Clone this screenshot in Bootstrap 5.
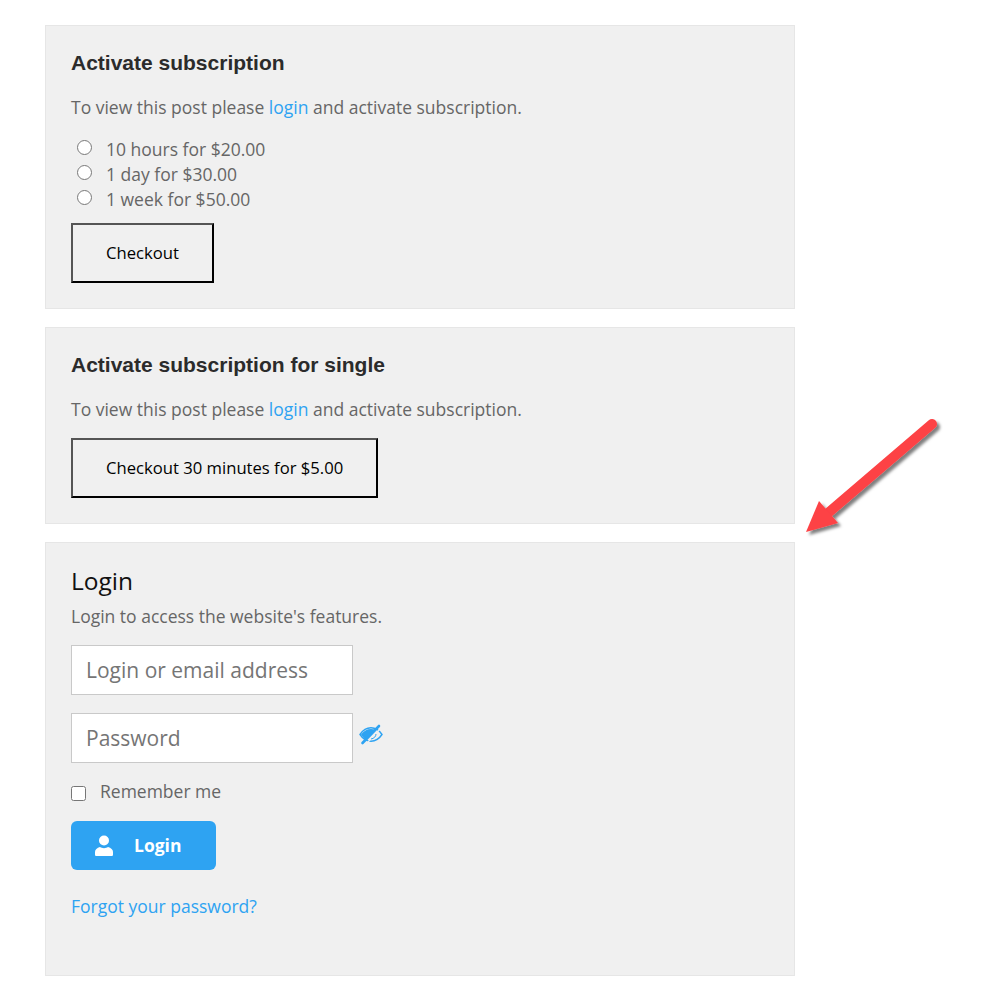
<!DOCTYPE html>
<html lang="en">
<head>
  <meta charset="UTF-8">
  <meta name="viewport" content="width=device-width, initial-scale=1.0">
  <title>Activate subscription</title>
  <link href="https://cdn.jsdelivr.net/npm/bootstrap@5.3.0/dist/css/bootstrap.min.css" rel="stylesheet">
  <style>
    body {
      background-color: #fff;
      font-family: "Open Sans", sans-serif;
      font-size: 17.5px;
      line-height: 25px;
      color: #666;
    }
    .page-wrap {
      width: 750px;
      margin: 25px 0 0 45px;
    }
    .sub-box {
      background-color: #f0f0f0;
      border: 1px solid #e6e6e6;
      padding: 25px;
      margin-bottom: 18px;
    }
    .sub-title {
      font-family: "Liberation Sans", sans-serif;
      font-weight: 700;
      font-size: 21px;
      line-height: 24px;
      color: #2b2b2b;
      margin: 0 0 20px;
    }
    .sub-text {
      margin: 0 0 16px;
    }
    .sub-text a, .forgot-link {
      color: #2ea3f2;
      text-decoration: none;
    }
    .plan-list {
      padding: 1px 0 0 6px;
      margin-bottom: 11px;
    }
    .plan-item {
      display: flex;
      height: 25px;
    }
    .plan-item input {
      width: 15px;
      height: 15px;
      margin: 3px 14px 0 0;
      accent-color: #666;
      flex: none;
    }
    .checkout-btn {
      display: inline-block;
      background-color: transparent;
      height: 60px;
      padding: 0 33px 2px;
      font-size: 16.65px;
      color: #000;
      border: 2px solid;
      border-color: #555 #000 #000 #555;
      border-radius: 0;
    }
    .login-title {
      font-size: 24.5px;
      line-height: 26px;
      color: #111;
      margin: 0 0 10px;
    }
    .login-sub {
      margin: 0 0 16px;
    }
    .login-input {
      width: 282px;
      height: 50px;
      border: 1px solid #c9c9c9;
      border-radius: 0;
      padding: 0 14px 1px;
      font-size: 21px;
      color: #666;
    }
    .login-input::placeholder {
      color: #757575;
      opacity: 1;
    }
    .pass-row {
      margin: 18px 0 16px;
    }
    .eye-icon {
      margin: 10px 0 0 6px;
    }
    .remember-row {
      margin-bottom: 17px;
    }
    .remember-row input {
      width: 15px;
      height: 15px;
      margin: 7px 14px 0 0;
      accent-color: #666;
    }
    .login-btn {
      width: 145px;
      height: 49px;
      background-color: #2ea3f2;
      color: #fff;
      font-weight: 700;
      font-size: 17.5px;
      border: 0;
      border-radius: 6px;
      padding: 0 0 0 24px;
      gap: 21px;
    }
    .forgot-wrap {
      margin: 24px 0 31px;
    }
    .arrow-mark {
      position: absolute;
      left: 800px;
      top: 412px;
    }
  </style>
</head>
<body>
  <div class="page-wrap">
    <div class="sub-box">
      <h3 class="sub-title">Activate subscription</h3>
      <p class="sub-text">To view this post please <a href="#">login</a> and activate subscription.</p>
      <div class="plan-list">
        <label class="plan-item"><input type="radio" name="plan"><span>10 hours for $20.00</span></label>
        <label class="plan-item"><input type="radio" name="plan"><span>1 day for $30.00</span></label>
        <label class="plan-item"><input type="radio" name="plan"><span>1 week for $50.00</span></label>
      </div>
      <button type="button" class="checkout-btn">Checkout</button>
    </div>

    <div class="sub-box">
      <h3 class="sub-title">Activate subscription for single</h3>
      <p class="sub-text">To view this post please <a href="#">login</a> and activate subscription.</p>
      <button type="button" class="checkout-btn">Checkout 30 minutes for $5.00</button>
    </div>

    <div class="sub-box mb-0">
      <h2 class="login-title">Login</h2>
      <p class="login-sub">Login to access the website's features.</p>
      <form>
        <input type="text" class="login-input d-block" placeholder="Login or email address">
        <div class="pass-row d-flex align-items-start">
          <input type="password" class="login-input" placeholder="Password">
          <svg class="eye-icon" width="24" height="22" viewBox="0 0 24 22" fill="none">
            <path d="M1 11.5C4 7 8 4.8 12 4.8s8 2.2 11 6.700c-3 4.500-7 6.700-11 6.700S4 16 1 11.500Z" stroke="#2ea3f2" stroke-width="1.400"/>
            <path d="M2 11.500C4.500 8 8 6 12 6c1.500 0 3 .3 4.200.8L7 17C5 15.800 3.500 13.600 2 11.500Z" fill="#2ea3f2"/>
            <path d="M21.500 5.500 8 20" stroke="#f0f0f0" stroke-width="1.200"/>
            <path d="M20 3 3.500 20" stroke="#2ea3f2" stroke-width="2.600" stroke-linecap="round"/>
            <path d="M17 11c0 2.500-2 4.500-5 5" stroke="#2ea3f2" stroke-width="1"/>
          </svg>
        </div>
        <label class="remember-row d-flex align-items-start">
          <input type="checkbox">
          <span>Remember me</span>
        </label>
        <button type="button" class="login-btn d-flex align-items-center">
          <svg width="18" height="21" viewBox="0 0 18 21" fill="#fff">
            <circle cx="9" cy="5.500" r="5"/>
            <path d="M0 19.500V17c0-2.500 2-4 5-5 2 1.500 6 1.500 8 0 3 1 5 2.500 5 5v2.500c0 1-.6 1.500-1.500 1.500h-15C.6 21 0 20.500 0 19.500Z"/>
          </svg>
          <span>Login</span>
        </button>
        <div class="forgot-wrap"><a class="forgot-link" href="#">Forgot your password?</a></div>
      </form>
    </div>
  </div>

  <svg class="arrow-mark" width="146" height="128" viewBox="0 0 146 128">
    <defs>
      <filter id="arrowShadow" x="-20%" y="-20%" width="140%" height="140%">
        <feDropShadow dx="3" dy="3" stdDeviation="1.500" flood-color="#000" flood-opacity=".5"/>
      </filter>
    </defs>
    <g filter="url(#arrowShadow)" fill="#fd4245">
      <path d="M132 12 28 101" stroke="#fd4245" stroke-width="10" stroke-linecap="round"/>
      <path d="M6 120 19 89 38 111Z"/>
    </g>
  </svg>
</body>
</html>
